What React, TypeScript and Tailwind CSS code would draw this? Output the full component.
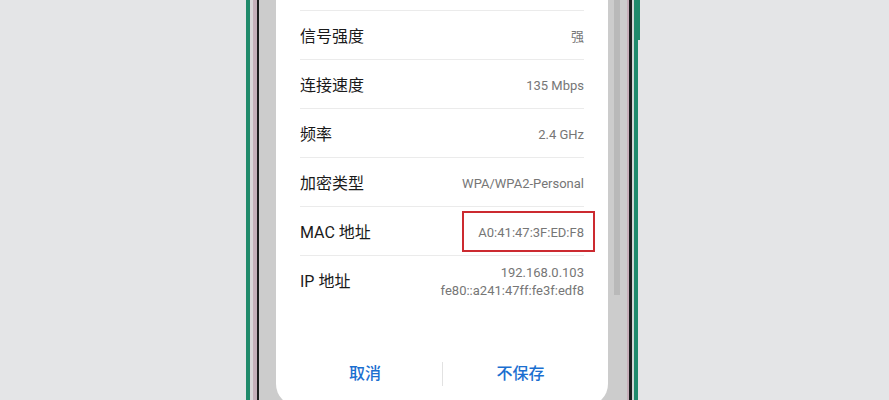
import React from "react";

const rows = [
  { label: "信号强度", value: ["强"] },
  { label: "连接速度", value: ["135 Mbps"] },
  { label: "频率", value: ["2.4 GHz"] },
  { label: "加密类型", value: ["WPA/WPA2-Personal"] },
  { label: "MAC 地址", value: ["A0:41:47:3F:ED:F8"], boxed: true },
  { label: "IP 地址", value: ["192.168.0.103", "fe80::a241:47ff:fe3f:edf8"] },
];

export default function App() {
  return (
    <div
      className="w-[889px] h-[400px] overflow-hidden flex bg-[#e4e5e7]"
      style={{ fontFamily: 'Roboto, "Noto Sans CJK SC", sans-serif' }}
    >
      <div className="w-[246px] shrink-0" />
      {/* left frame */}
      <div className="w-[4px] shrink-0 bg-[#1f8a6b]" />
      <div className="w-[3px] shrink-0 bg-[#d9d6d8]" />
      <div className="w-[4px] shrink-0 bg-[#c4aeb8]" />
      <div className="w-[2px] shrink-0 bg-[#1c1c1c]" />
      {/* screen */}
      <div className="w-[368px] shrink-0 bg-[#cccccc] flex">
        <div className="w-[17px] shrink-0" />
        <div className="w-[332px] shrink-0 h-[406px] bg-white rounded-b-[22px] flex flex-col">
          <div className="h-[10px] shrink-0" />
          <div className="flex flex-col px-[24px]">
            {rows.map((r) => (
              <div
                key={r.label}
                className="h-[49px] border-t border-[#ebebeb] flex items-center justify-between relative pt-[3px]"
              >
                <span className="text-[16px] text-[#1a1a1a] leading-none">{r.label}</span>
                <div className="flex flex-col items-end text-[13px] text-[#767676] leading-[18px]">
                  {r.value.map((v) => (
                    <span key={v}>{v}</span>
                  ))}
                </div>
                {r.boxed && (
                  <div className="absolute right-[-11px] top-[4px] w-[133px] h-[41px] border-2 border-[#cc2a30]" />
                )}
              </div>
            ))}
          </div>
          <div className="flex-1" />
          <div className="h-[56px] shrink-0 flex items-center mb-[4px]">
            <div className="w-[166px] flex justify-center pl-[12px] text-[16px] font-medium text-[#1b6fd0]">取消</div>
            <div className="w-px h-[24px] bg-[#e2e2e2]" />
            <div className="flex-1 flex justify-center pr-[10px] text-[16px] font-medium text-[#1b6fd0]">不保存</div>
          </div>
        </div>
        <div className="w-[6px] shrink-0" />
        <div className="w-[6px] shrink-0 h-[295px] bg-[#b9b9b9]" />
      </div>
      {/* right frame */}
      <div className="w-[2px] shrink-0 bg-[#c7b0ba]" />
      <div className="w-[3px] shrink-0 bg-[#1c1c1c]" />
      <div className="w-[2px] shrink-0 bg-[#cfd6d4]" />
      <div className="w-[6px] shrink-0 flex flex-col">
        <div className="h-[40px] bg-[#1f8a6b]" />
        <div className="flex-1 flex">
          <div className="w-[4px] bg-[#1f8a6b]" />
        </div>
      </div>
      <div className="flex-1" />
    </div>
  );
}
